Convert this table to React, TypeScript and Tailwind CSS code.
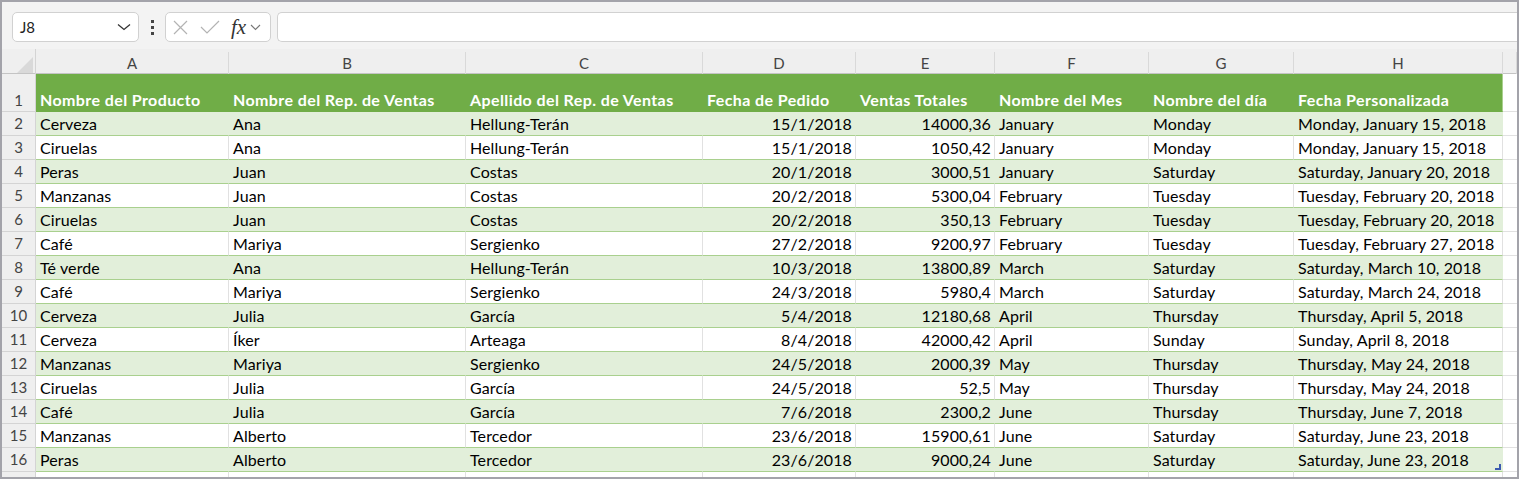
import React from 'react';

const cols = ['A', 'B', 'C', 'D', 'E', 'F', 'G', 'H'];
const rightAligned = [false, false, false, true, true, false, false, false];

const headers = [
    'Nombre del Producto',
    'Nombre del Rep. de Ventas',
    'Apellido del Rep. de Ventas',
    'Fecha de Pedido',
    'Ventas Totales',
    'Nombre del Mes',
    'Nombre del día',
    'Fecha Personalizada',
];

const rows: string[][] = [
    ['Cerveza', 'Ana', 'Hellung-Terán', '15/1/2018', '14000,36', 'January', 'Monday', 'Monday, January 15, 2018'],
    ['Ciruelas', 'Ana', 'Hellung-Terán', '15/1/2018', '1050,42', 'January', 'Monday', 'Monday, January 15, 2018'],
    ['Peras', 'Juan', 'Costas', '20/1/2018', '3000,51', 'January', 'Saturday', 'Saturday, January 20, 2018'],
    ['Manzanas', 'Juan', 'Costas', '20/2/2018', '5300,04', 'February', 'Tuesday', 'Tuesday, February 20, 2018'],
    ['Ciruelas', 'Juan', 'Costas', '20/2/2018', '350,13', 'February', 'Tuesday', 'Tuesday, February 20, 2018'],
    ['Café', 'Mariya', 'Sergienko', '27/2/2018', '9200,97', 'February', 'Tuesday', 'Tuesday, February 27, 2018'],
    ['Té verde', 'Ana', 'Hellung-Terán', '10/3/2018', '13800,89', 'March', 'Saturday', 'Saturday, March 10, 2018'],
    ['Café', 'Mariya', 'Sergienko', '24/3/2018', '5980,4', 'March', 'Saturday', 'Saturday, March 24, 2018'],
    ['Cerveza', 'Julia', 'García', '5/4/2018', '12180,68', 'April', 'Thursday', 'Thursday, April 5, 2018'],
    ['Cerveza', 'Íker', 'Arteaga', '8/4/2018', '42000,42', 'April', 'Sunday', 'Sunday, April 8, 2018'],
    ['Manzanas', 'Mariya', 'Sergienko', '24/5/2018', '2000,39', 'May', 'Thursday', 'Thursday, May 24, 2018'],
    ['Ciruelas', 'Julia', 'García', '24/5/2018', '52,5', 'May', 'Thursday', 'Thursday, May 24, 2018'],
    ['Café', 'Julia', 'García', '7/6/2018', '2300,2', 'June', 'Thursday', 'Thursday, June 7, 2018'],
    ['Manzanas', 'Alberto', 'Tercedor', '23/6/2018', '15900,61', 'June', 'Saturday', 'Saturday, June 23, 2018'],
    ['Peras', 'Alberto', 'Tercedor', '23/6/2018', '9000,24', 'June', 'Saturday', 'Saturday, June 23, 2018'],
];

const gridCols = 'grid grid-cols-[34px_193px_237px_237px_153px_139px_154px_145px_209px_14px]';

function Toolbar() {
    return (
        <div className="flex h-[47px] items-start pl-[10px] pt-[10px]">
            {/* name box */}
            <div className="flex h-[30px] w-[127px] items-center justify-between rounded-[5px] border border-[#d1d1d1] bg-white pl-[7px] pr-[7px]">
                <span className="text-[15px] text-[#222]">J8</span>
                <svg width="14" height="8" viewBox="0 0 14 8" fill="none" stroke="#333" strokeWidth="1.3">
                    <path d="M1 1.5 L7 6.5 L13 1.5" />
                </svg>
            </div>

            <div className="flex h-[30px] w-[26px] flex-col items-center justify-center gap-[3px]">
                <span className="h-[3px] w-[3px] bg-[#444]" />
                <span className="h-[3px] w-[3px] bg-[#444]" />
                <span className="h-[3px] w-[3px] bg-[#444]" />
            </div>

            {/* formula buttons */}
            <div className="flex h-[30px] w-[106px] items-center rounded-[5px] border border-[#d1d1d1] bg-white pl-[6px]">
                <svg width="17" height="15" viewBox="0 0 17 15" fill="none" stroke="#b3b3b3" strokeWidth="1.2">
                    <path d="M2 1 L15 14 M15 1 L2 14" />
                </svg>
                <svg className="ml-[11px]" width="20" height="14" viewBox="0 0 20 14" fill="none" stroke="#b3b3b3" strokeWidth="1.2">
                    <path d="M1 7 L7 13 L19 1" />
                </svg>
                <span className="ml-[11px] font-['Liberation_Serif'] text-[21px] italic leading-none text-[#333]">fx</span>
                <svg className="ml-[4px]" width="11" height="7" viewBox="0 0 11 7" fill="none" stroke="#777" strokeWidth="1.1">
                    <path d="M1 1 L5.5 5.5 L10 1" />
                </svg>
            </div>

            <div className="ml-[6px] h-[30px] flex-1 rounded-l-[5px] border border-r-0 border-[#d1d1d1] bg-white" />
        </div>
    );
}

function ColumnHeader() {
    return (
        <div className={`${gridCols} h-[25px] border-b border-[#c4c4c4] bg-[#efefef]`}>
            <div className="flex items-end justify-end border-r border-[#d4d4d4] pb-[2px] pr-[2px]">
                <svg width="16" height="16" viewBox="0 0 16 16">
                    <path d="M16 0 L16 16 L0 16 Z" fill="#d9d9d9" />
                </svg>
            </div>
            {cols.map((c) => (
                <div key={c} className="flex items-center justify-center pt-[3px]">
                    <div className="flex h-full w-full items-center justify-center border-r border-[#d9d9d9] text-[15px] text-[#444]">
                        {c}
                    </div>
                </div>
            ))}
            <div className="pt-[3px]">
                <div className="h-full w-full border-r border-[#d9d9d9]" />
            </div>
        </div>
    );
}

export default function App() {
    return (
        <div className="h-[479px] w-[1519px] overflow-hidden border-2 border-[#a3a3aa] bg-[#f3f3f3] font-['Lato','Liberation_Sans',sans-serif]">
            <Toolbar />
            <ColumnHeader />

            {/* row 1: table header */}
            <div className={`${gridCols} h-[38px]`}>
                <div className="flex items-end justify-center border-r border-b border-[#d4d4d4] bg-[#efefef] pb-[2px] text-[15px] leading-[18px] text-[#444]">
                    1
                </div>
                {headers.map((h, i) => (
                    <div
                        key={h}
                        className={`flex items-end overflow-hidden whitespace-nowrap border-b border-[#70ad47] bg-[#70ad47] pb-[2px] pl-[4px] text-[16px] leading-[18px] font-bold tracking-[0.4px] text-white ${
                            i === 7 ? 'border-r border-r-[#a9d08e]' : ''
                        }`}
                    >
                        {h}
                    </div>
                ))}
                <div className="border-b border-[#e1e1e1] bg-white" />
            </div>

            {rows.map((r, ri) => {
                const green = ri % 2 === 0;
                return (
                    <div key={ri} className={`${gridCols} h-[24px]`}>
                        <div className="flex items-center justify-center border-r border-b border-[#d4d4d4] bg-[#efefef] text-[15px] text-[#444]">
                            {ri + 2}
                        </div>
                        {r.map((v, ci) => (
                            <div
                                key={ci}
                                className={`relative flex items-center overflow-hidden whitespace-nowrap border-b border-r border-b-[#a9d08e] text-[16px] tracking-[0.1px] text-black ${
                                    green ? 'bg-[#e2efda] border-r-[#e2efda]' : 'bg-white border-r-[#e1e1e1]'
                                } ${ci === 7 ? 'border-r-[#a9d08e]' : ''} ${
                                    rightAligned[ci] ? 'justify-end pr-[3px]' : 'pl-[4px]'
                                }`}
                            >
                                {v}
                                {ri === rows.length - 1 && ci === 7 && (
                                    <svg className="absolute bottom-[1px] right-[1px]" width="6" height="6" viewBox="0 0 6 6">
                                        <path d="M6 0 L6 6 L0 6 L0 4 L4 4 L4 0 Z" fill="#3c5bb0" />
                                    </svg>
                                )}
                            </div>
                        ))}
                        <div className="border-b border-[#e1e1e1] bg-white" />
                    </div>
                );
            })}

            {/* partial row 17 */}
            <div className={`${gridCols} h-[10px]`}>
                <div className="border-r border-[#d4d4d4] bg-[#efefef]" />
                {cols.map((c) => (
                    <div key={c} className="border-r border-[#e1e1e1] bg-white" />
                ))}
                <div className="bg-white" />
            </div>
        </div>
    );
}
